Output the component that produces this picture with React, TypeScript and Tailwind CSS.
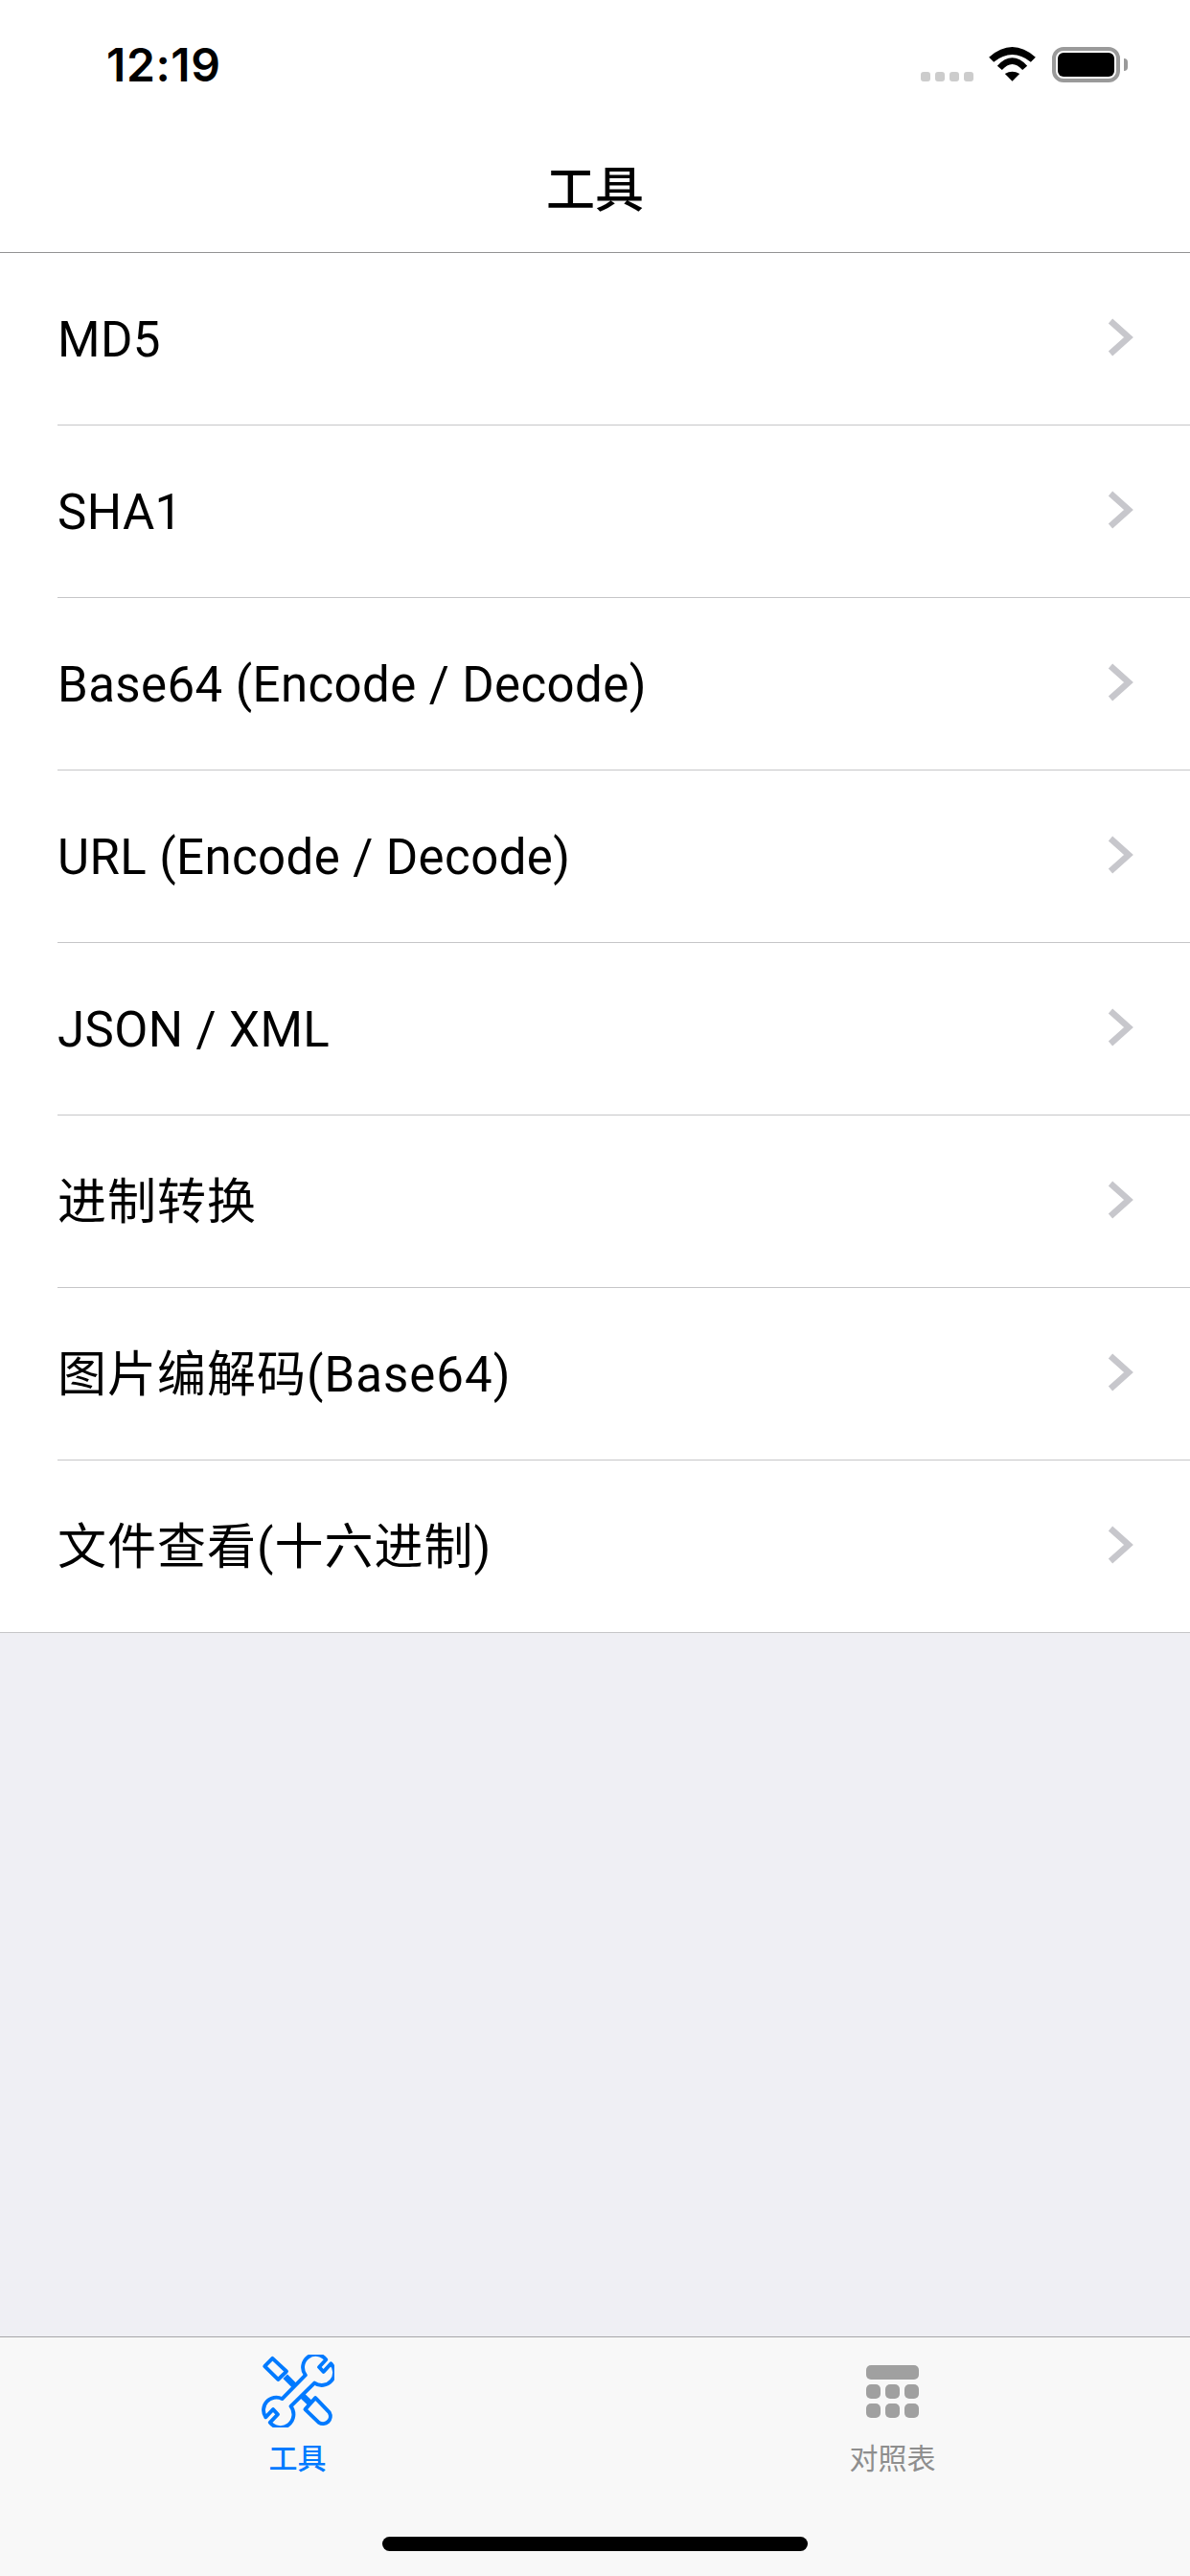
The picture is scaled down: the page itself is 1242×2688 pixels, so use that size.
import React from "react";

const rows = [
  "MD5",
  "SHA1",
  "Base64 (Encode / Decode)",
  "URL (Encode / Decode)",
  "JSON / XML",
  "进制转换",
  "图片编解码(Base64)",
  "文件查看(十六进制)",
];

const ToolsIcon = () => (
  <svg width="76" height="76" viewBox="152 108 234 234" fill="none" stroke="#007aff" strokeWidth="12" strokeLinejoin="round">
    {/* wrench */}
    <path d="M293 174 A41 41 0 0 1 359 124 L337 148 L351 163 L375 137 A41 41 0 0 1 322 199 L246 274 A41 41 0 0 1 179 326 L204 300 L189 284 L165 309 A41 41 0 0 1 218 250 Z" />
    {/* screwdriver */}
    <path d="M187 120 L232 162 L205 188 L162 145 Z" />
    <path d="M228 178 L258 208" strokeWidth="20" />
    <path d="M283 240 L308 264" strokeWidth="20" />
    <path d="M325 247 L370 294 A24 24 0 0 1 336 326 L292 284 Z" />
  </svg>
);

const TableIcon = () => (
  <div className="flex flex-col gap-[5px] w-[55px]">
    <div className="h-[15px] rounded-[5px] bg-[#a0a0a0]" />
    {[0, 1].map((r) => (
      <div key={r} className="flex justify-between">
        {[0, 1, 2].map((c) => (
          <div key={c} className="w-[15px] h-[15px] rounded-[5px] bg-[#a0a0a0]" />
        ))}
      </div>
    ))}
  </div>
);

const WifiIcon = () => (
  <svg width="49" height="36" viewBox="397 88 146 108" fill="#000">
    <path d="M397 120 Q470 56 543 120 L528 135 Q470 89 412 135 Z" />
    <path d="M423 147 Q470 97 517 147 L502 160 Q470 124 438 160 Z" />
    <path d="M447 172 Q470 158 493 172 L470 195 Z" />
  </svg>
);

const App = () => {
  return (
    <div className="flex flex-col w-[1242px] h-[2688px] bg-[#efeff4] text-black font-['Roboto','Noto_Sans_CJK_SC',sans-serif]">
      <header className="bg-white border-b border-[#929294]">
        <div className="flex justify-between h-[132px] pl-[111px] pr-[65px]">
          <span className="mt-[39px] text-[48px] leading-[58px] font-semibold tracking-[0.6px] font-['Inter']">12:19</span>
          <div className="flex items-start">
            <div className="flex gap-[5px] mt-[75px] mr-[16px]">
              {[0, 1, 2, 3].map((d) => (
                <div key={d} className="w-[10px] h-[10px] rounded-[3px] bg-[#cccccc]" />
              ))}
            </div>
            <div className="mt-[49px] mr-[17px]">
              <WifiIcon />
            </div>
            <div className="flex items-center mt-[49px]">
              <div className="w-[71px] h-[37px] p-[2px] border-[4px] border-[#9a9a9a] rounded-[12px] bg-white">
                <div className="w-full h-full rounded-[6px] bg-black" />
              </div>
              <div className="ml-[4px] w-[4px] h-[13px] rounded-r-[4px] bg-[#9a9a9a]" />
            </div>
          </div>
        </div>
        <div className="flex items-center justify-center h-[131px] pt-[4px] text-[51px] font-medium">工具</div>
      </header>

      <div className="bg-white border-b border-[#c6c6c8]">
        {rows.map((row, index) => (
          <div key={row} className="pl-[60px]">
            <div className={index < rows.length - 1 ? "flex items-center justify-between h-[180px] pr-[59px] border-b border-[#c6c6c8]" : "flex items-center justify-between h-[179px] pr-[59px]"}>
              <span className={/[^\x00-\x7f]/.test(row) ? "pt-[2px] text-[51px] leading-[60px] tracking-[1px]" : "pt-[2px] text-[51px] leading-[60px] tracking-[0.4px]"}>{row}</span>
              <svg width="28" height="42" viewBox="0 0 28 42" fill="none" stroke="#c7c7cc" strokeWidth="6.5" className="mb-[4px]">
                <path d="M4 4 L23 21 L4 38" />
              </svg>
            </div>
          </div>
        ))}
      </div>

      <div className="flex-1" />

      <footer className="relative h-[250px] bg-[#f8f8f8] border-t border-[#a6a6a8]">
        <div className="flex">
          <div className="flex flex-col items-center w-1/2 pt-[18px]">
            <ToolsIcon />
            <span className="mt-[15px] text-[30px] leading-[36px] font-medium text-[#007aff]">工具</span>
          </div>
          <div className="flex flex-col items-center w-1/2 pt-[29px]">
            <TableIcon />
            <span className="mt-[25px] text-[30px] leading-[36px] text-[#8e8e8e]">对照表</span>
          </div>
        </div>
        <div className="absolute bottom-[26px] left-[399px] w-[444px] h-[15px] rounded-full bg-black" />
      </footer>
    </div>
  );
};

export default App;
